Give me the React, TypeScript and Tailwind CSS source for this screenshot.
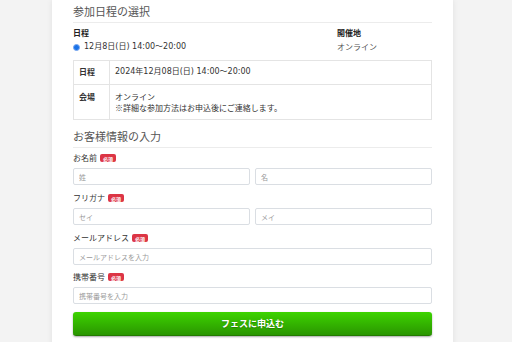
import React from "react";

const font = { fontFamily: '"DejaVu Sans", "Noto Sans CJK JP", sans-serif' };
const jp = { fontFamily: '"Noto Sans CJK JP", "Noto Sans", sans-serif' };

function Badge() {
  return (
    <span className="ml-[3px] inline-flex h-[8px] w-[16px] items-center justify-center rounded-[2px] bg-[#dc3545] text-[5px] font-bold leading-none text-white">
      必須
    </span>
  );
}

function Label({ children }: { children: React.ReactNode }) {
  return (
    <div className="flex h-[12px] items-center text-[8px] leading-[12px] text-[#333]">
      <span>{children}</span>
      <Badge />
    </div>
  );
}

function Input({ placeholder }: { placeholder: string }) {
  return (
    <input
      placeholder={placeholder}
      className="block h-[17px] w-full rounded-[2px] border border-[#dadee3] bg-white px-[5px] text-[7px] text-[#333] outline-none placeholder:text-[#9a9a9a]"
      style={jp}
    />
  );
}

export default function App() {
  return (
    <div className="min-h-[342px] w-[512px] overflow-hidden bg-[#f3f3f3]" style={jp}>
      <div className="ml-[52px] w-[401px] bg-white px-[21px] pb-[20px] shadow-[0_0_6px_rgba(0,0,0,0.08)]">
        <h2 className="border-b border-[#ececec] pb-[3px] pt-[3px] text-[11px] font-normal leading-[16px] text-[#555]">
          参加日程の選択
        </h2>
        <div className="grid grid-cols-[264px_1fr] pt-[4px] pb-[7px]">
          <div>
            <div className="text-[8px] font-bold leading-[11px] text-[#222]">日程</div>
            <div className="mt-[3px] flex items-center text-[8px] leading-[12px] text-[#333]">
              <span className="mr-[4px] flex h-[7px] w-[7px] items-center justify-center rounded-full border border-[#7aa7f0] bg-[#1a73e8]">
                <span className="h-[3px] w-[3px] rounded-full bg-[#1a73e8]" />
              </span>
              <span style={font}>12月8日(日) 14:00〜20:00</span>
            </div>
          </div>
          <div>
            <div className="text-[8px] font-bold leading-[11px] text-[#222]">開催地</div>
            <div className="mt-[3px] text-[8px] leading-[12px] text-[#555]">オンライン</div>
          </div>
        </div>
        <div className="border border-[#e4e4e4] text-[8px] text-[#333]">
          <div className="grid grid-cols-[36px_1fr] border-b border-[#e4e4e4]">
            <div className="border-r border-[#e4e4e4] px-[5px] pt-[5px] pb-[7px] font-bold leading-[11px]">日程</div>
            <div className="px-[5px] pt-[5px] pb-[7px] leading-[11px]" style={font}>
              2024年12月08日(日) 14:00〜20:00
            </div>
          </div>
          <div className="grid grid-cols-[36px_1fr]">
            <div className="border-r border-[#e4e4e4] px-[5px] pt-[6px] pb-[6px] font-bold leading-[11px]">会場</div>
            <div className="px-[5px] pt-[6px] pb-[6px] leading-[11px]">
              <div>オンライン</div>
              <div>※詳細な参加方法はお申込後にご連絡します。</div>
            </div>
          </div>
        </div>
        <h2 className="mt-[8px] border-b border-[#ececec] pb-[3px] text-[11px] font-normal leading-[16px] text-[#555]">
          お客様情報の入力
        </h2>
        <div className="mt-[4px]">
          <Label>お名前</Label>
          <div className="mt-[4px] grid grid-cols-2 gap-[5px]">
            <Input placeholder="姓" />
            <Input placeholder="名" />
          </div>
        </div>
        <div className="mt-[7px]">
          <Label>フリガナ</Label>
          <div className="mt-[4px] grid grid-cols-2 gap-[5px]">
            <Input placeholder="セイ" />
            <Input placeholder="メイ" />
          </div>
        </div>
        <div className="mt-[7px]">
          <Label>メールアドレス</Label>
          <div className="mt-[4px]">
            <Input placeholder="メールアドレスを入力" />
          </div>
        </div>
        <div className="mt-[6px]">
          <Label>携帯番号</Label>
          <div className="mt-[4px]">
            <Input placeholder="携帯番号を入力" />
          </div>
        </div>
        <button
          className="mt-[8px] flex h-[24px] w-full items-center justify-center rounded-[3px] border-b border-[#237a00] bg-gradient-to-b from-[#3dd400] to-[#2a9600] text-[9px] font-bold text-white shadow-[0_1px_2px_rgba(0,0,0,0.35)] [text-shadow:0_1px_1px_rgba(0,0,0,0.25)]"
          style={jp}
        >
          フェスに申込む
        </button>
      </div>
    </div>
  );
}
